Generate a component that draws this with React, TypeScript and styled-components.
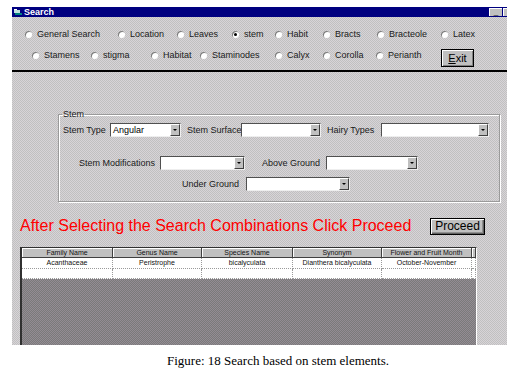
import styled, { createGlobalStyle, css } from "styled-components";

const GlobalStyle = createGlobalStyle`
  body {
    margin: 0;
    background: #ffffff;
    font-family: "Liberation Sans", Arial, sans-serif;
  }
`;

const dither = (a: string, b: string) => css`
  background: repeating-conic-gradient(${a} 0 25%, ${b} 0 50%) 0 0 / 2px 2px;
`;

type Opt = { label: string; w?: number; checked?: boolean };

const topRow: Opt[] = [
  { label: "General Search", w: 93 },
  { label: "Location", w: 59 },
  { label: "Leaves", w: 55 },
  { label: "stem", w: 43, checked: true },
  { label: "Habit", w: 48 },
  { label: "Bracts", w: 54 },
  { label: "Bracteole", w: 64 },
  { label: "Latex" },
];

const bottomRow: Opt[] = [
  { label: "Stamens", w: 59 },
  { label: "stigma", w: 60 },
  { label: "Habitat", w: 49 },
  { label: "Staminodes", w: 75 },
  { label: "Calyx", w: 48 },
  { label: "Corolla", w: 53 },
  { label: "Perianth", w: 65 },
];

const columns = [
  "Family Name",
  "Genus Name",
  "Species Name",
  "Synonym",
  "Flower and Fruit Month",
];

const results = [
  ["Acanthaceae", "Peristrophe", "bicalyculata", "Dianthera bicalyculata", "October-November"],
  ["", "", "", "", ""],
];

const Page = styled.div`
  padding: 7px 0 0 12px;
`;

const Window = styled.div`
  width: 495px;
  height: 338px;
  display: flex;
  flex-direction: column;
  overflow: hidden;
  ${dither("#c0c0c0", "#d8d4d8")}
`;

const TitleBar = styled.div`
  height: 10px;
  background: #000080;
  display: flex;
  align-items: center;
  padding-left: 2px;
`;

const TitleText = styled.span`
  color: #fff;
  font-size: 9px;
  font-weight: bold;
  margin-left: 2px;
  line-height: 10px;
`;

const TitleButtons = styled.div`
  margin-left: auto;
  display: flex;
  gap: 1px;
`;

const TitleButton = styled.div<{ $w: number }>`
  width: ${(p) => p.$w}px;
  height: 8px;
  background: #c0c0c0;
  border-top: 1px solid #fff;
  border-left: 1px solid #fff;
  box-sizing: border-box;
  font-size: 8px;
  line-height: 6px;
  color: #000;
  text-align: center;
  overflow: hidden;
`;

const Options = styled.div`
  display: flex;
  flex-direction: column;
  padding-top: 10px;
  gap: 7px;
`;

const RadioRow = styled.div<{ $pad: number }>`
  display: flex;
  align-items: flex-start;
  padding-left: ${(p) => p.$pad}px;
`;

const Option = styled.label<{ $w?: number }>`
  display: flex;
  align-items: center;
  gap: 5px;
  height: 14px;
  flex: none;
  width: ${(p) => (p.$w ? `${p.$w}px` : "auto")};
  font-size: 9px;
  color: #1a1a1a;
  white-space: nowrap;
`;

const RadioDot = styled.span<{ $checked?: boolean }>`
  width: 7px;
  height: 7px;
  border-radius: 50%;
  background: #fff;
  box-shadow: inset 1px 1px 0 #7a7a7a;
  display: flex;
  align-items: center;
  justify-content: center;
  flex: none;
  &::after {
    content: "";
    width: 3px;
    height: 3px;
    border-radius: 50%;
    background: ${(p) => (p.$checked ? "#000" : "transparent")};
  }
`;

const WinButton = styled.button<{ $w: number; $h: number; $size: number }>`
  width: ${(p) => p.$w}px;
  height: ${(p) => p.$h}px;
  padding: 0;
  margin: 0;
  font-family: "Liberation Sans", Arial, sans-serif;
  font-size: ${(p) => p.$size}px;
  color: #000;
  background: #c0c0c0;
  border: 1px solid #000;
  box-shadow: inset 1px 1px 0 #fff, inset -1px -1px 0 #808080;
  flex: none;
`;

const ExitButton = styled(WinButton)`
  margin-top: 1px;
`;

const Divider = styled.div`
  height: 2px;
  background: #000;
  margin-top: 3px;
`;

const Body = styled.div`
  flex: 1;
  display: flex;
  flex-direction: column;
  padding-left: 8px;
  min-height: 0;
`;

const GroupBox = styled.fieldset`
  margin: 37px 0 0 38px;
  width: 442px;
  box-sizing: border-box;
  padding: 4px 0 10px 0;
  border: 1px solid #9a9a9a;
  box-shadow: 1px 1px 0 #fff, inset 1px 1px 0 #fff;
  display: flex;
  flex-direction: column;
`;

const Legend = styled.legend`
  font-size: 9px;
  line-height: 10px;
  color: #1a1a1a;
  padding: 0 1px;
  margin-left: 3px;
`;

const FieldRow = styled.div<{ $pad: number; $top: number }>`
  display: flex;
  align-items: center;
  height: 14px;
  margin-top: ${(p) => p.$top}px;
  padding-left: ${(p) => p.$pad}px;
`;

const FieldLabel = styled.span<{ $w: number; $gap?: number }>`
  width: ${(p) => p.$w}px;
  margin-left: ${(p) => p.$gap ?? 0}px;
  flex: none;
  font-size: 9px;
  color: #1a1a1a;
  white-space: nowrap;
`;

const Select = styled.div<{ $w: number }>`
  width: ${(p) => p.$w}px;
  height: 14px;
  box-sizing: border-box;
  background: #fff;
  border: 1px solid;
  border-color: #505050 #eeeeee #eeeeee #505050;
  display: flex;
  align-items: center;
  flex: none;
`;

const SelectValue = styled.span`
  flex: 1;
  font-size: 9px;
  padding-left: 2px;
  color: #000;
`;

const SelectArrow = styled.span`
  width: 10px;
  height: 12px;
  box-sizing: border-box;
  background: #c0c0c0;
  border-top: 1px solid #fff;
  border-left: 1px solid #fff;
  border-right: 1px solid #404040;
  border-bottom: 1px solid #404040;
  display: flex;
  align-items: center;
  justify-content: center;
  &::after {
    content: "";
    border-left: 2px solid transparent;
    border-right: 2px solid transparent;
    border-top: 2px solid #000;
  }
`;

const ActionRow = styled.div`
  display: flex;
  align-items: center;
  margin-top: 15px;
  height: 18px;
  padding-right: 22px;
`;

const Hint = styled.span`
  font-size: 16px;
  line-height: 18px;
  color: #ff0000;
  white-space: nowrap;
`;

const ProceedButton = styled(WinButton)`
  margin-left: auto;
  box-shadow: inset 1px 1px 0 #fff, inset -1px -1px 0 #606060, inset -2px -2px 0 #909090;
`;

const Grid = styled.div`
  margin-top: 12px;
  width: 457px;
  flex: 1;
  display: flex;
  flex-direction: column;
  box-sizing: border-box;
  border-left: 2px solid #303030;
  border-top: 1px solid #303030;
  border-right: 1px solid #ffffff;
  ${dither("#7a7a7a", "#948c94")}
`;

const GridRow = styled.div<{ $head?: boolean }>`
  display: grid;
  grid-template-columns: 91px 89px 91px 89px 90px 1fr;
  height: ${(p) => (p.$head ? 10 : 10.5)}px;
  background: ${(p) => (p.$head ? "#c0c0c0" : "#ffffff")};
`;

const Cell = styled.div<{ $head?: boolean }>`
  font-size: 7px;
  line-height: ${(p) => (p.$head ? 9 : 10)}px;
  text-align: center;
  color: #111;
  white-space: nowrap;
  overflow: hidden;
  box-sizing: border-box;
  ${(p) =>
    p.$head
      ? css`
          border-right: 1px solid #404040;
          border-bottom: 1px solid #404040;
          box-shadow: inset 1px 1px 0 #fff;
        `
      : css`
          border-right: 1px dotted #9a9a9a;
          border-bottom: 1px dotted #9a9a9a;
        `}
`;

const Caption = styled.div`
  font-family: "Liberation Serif", "Times New Roman", serif;
  font-size: 13px;
  line-height: 15px;
  margin-top: 8px;
  padding-left: 155px;
  color: #000;
`;

const Radio = ({ label, w, checked }: Opt) => (
  <Option $w={w}>
    <RadioDot $checked={checked} />
    {label}
  </Option>
);

const Combo = ({ w, value }: { w: number; value?: string }) => (
  <Select $w={w}>
    <SelectValue>{value}</SelectValue>
    <SelectArrow />
  </Select>
);

const TitleIcon = () => (
  <svg width="8" height="7" viewBox="0 0 8 7">
    <rect x="0" y="1" width="6" height="3" fill="#c0e0e0" />
    <rect x="1" y="4" width="7" height="2" fill="#008080" />
    <rect x="0" y="0" width="3" height="1" fill="#ffffff" />
  </svg>
);

export default function App() {
  return (
    <Page>
      <GlobalStyle />
      <Window>
        <TitleBar>
          <TitleIcon />
          <TitleText>Search</TitleText>
          <TitleButtons>
            <TitleButton $w={13}>_</TitleButton>
            <TitleButton $w={4} />
          </TitleButtons>
        </TitleBar>

        <Options>
          <RadioRow $pad={13}>
            {topRow.map((o) => (
              <Radio key={o.label} {...o} />
            ))}
          </RadioRow>
          <RadioRow $pad={20}>
            {bottomRow.map((o) => (
              <Radio key={o.label} {...o} />
            ))}
            <ExitButton $w={33} $h={18} $size={11}>
              <u>E</u>xit
            </ExitButton>
          </RadioRow>
        </Options>
        <Divider />

        <Body>
          <GroupBox>
            <Legend>Stem</Legend>
            <FieldRow $pad={4} $top={0}>
              <FieldLabel $w={47}>Stem Type</FieldLabel>
              <Combo w={71} value="Angular" />
              <FieldLabel $w={54} $gap={6}>Stem Surface</FieldLabel>
              <Combo w={80} />
              <FieldLabel $w={54} $gap={6}>Hairy Types</FieldLabel>
              <Combo w={108} />
            </FieldRow>
            <FieldRow $pad={20} $top={19}>
              <FieldLabel $w={81}>Stem Modifications</FieldLabel>
              <Combo w={85} />
              <FieldLabel $w={64} $gap={17}>Above Ground</FieldLabel>
              <Combo w={92} />
            </FieldRow>
            <FieldRow $pad={123} $top={7}>
              <FieldLabel $w={64}>Under Ground</FieldLabel>
              <Combo w={104} />
            </FieldRow>
          </GroupBox>

          <ActionRow>
            <Hint>After Selecting the Search Combinations Click Proceed</Hint>
            <ProceedButton $w={55} $h={17} $size={12}>
              Proceed
            </ProceedButton>
          </ActionRow>

          <Grid>
            <GridRow $head>
              {columns.map((c) => (
                <Cell $head key={c}>
                  {c}
                </Cell>
              ))}
              <Cell $head />
            </GridRow>
            {results.map((row, i) => (
              <GridRow key={i}>
                {row.map((v, j) => (
                  <Cell key={j}>{v}</Cell>
                ))}
                <Cell />
              </GridRow>
            ))}
          </Grid>
        </Body>
      </Window>
      <Caption>Figure: 18 Search based on stem elements.</Caption>
    </Page>
  );
}
